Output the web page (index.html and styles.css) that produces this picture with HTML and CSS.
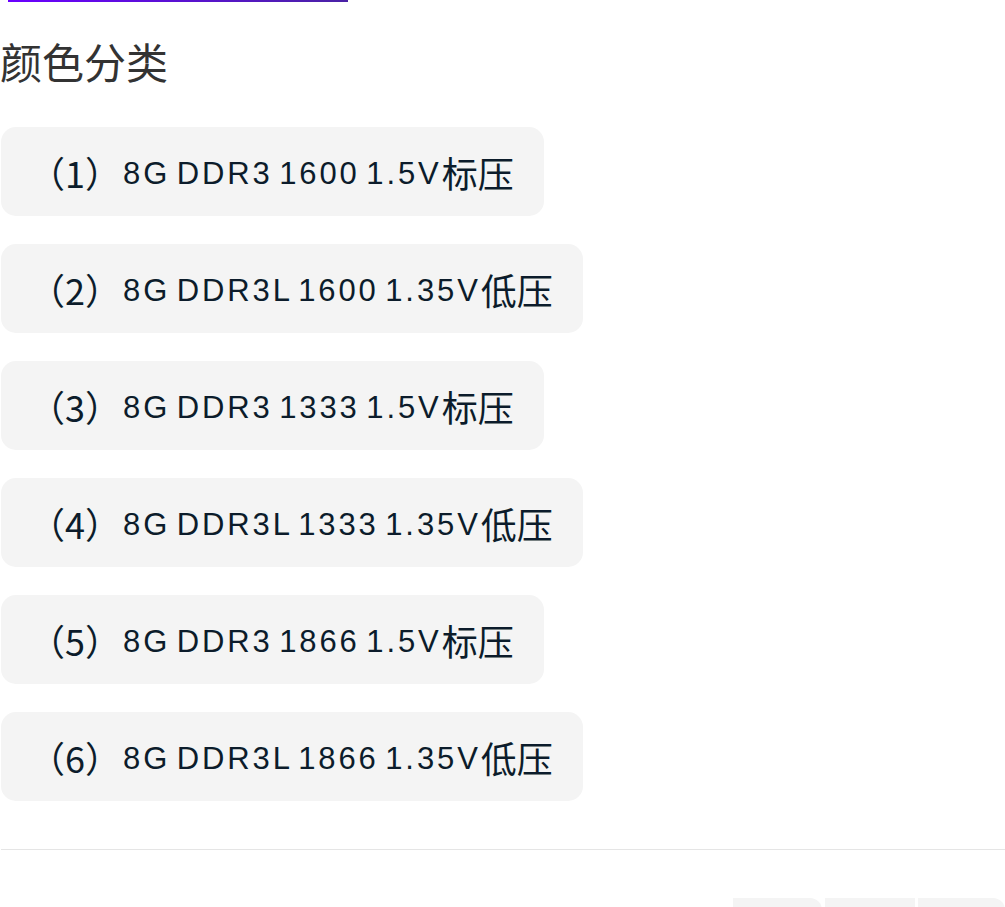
FILE: index.html
```html
<!DOCTYPE html>
<html lang="zh-CN">
<head>
<meta charset="utf-8">
<title>颜色分类</title>
<link rel="stylesheet" href="styles.css">
</head>
<body>
<div class="topbar"></div>
<h2 class="title">颜色分类</h2>
<div class="options">
  <div class="opt"><span class="cj">（1）</span><span class="lt">8G DDR3 1600 1.5V</span><span class="cj">标压</span></div>
  <div class="opt"><span class="cj">（2）</span><span class="lt">8G DDR3L 1600 1.35V</span><span class="cj">低压</span></div>
  <div class="opt"><span class="cj">（3）</span><span class="lt">8G DDR3 1333 1.5V</span><span class="cj">标压</span></div>
  <div class="opt"><span class="cj">（4）</span><span class="lt">8G DDR3L 1333 1.35V</span><span class="cj">低压</span></div>
  <div class="opt"><span class="cj">（5）</span><span class="lt">8G DDR3 1866 1.5V</span><span class="cj">标压</span></div>
  <div class="opt"><span class="cj">（6）</span><span class="lt">8G DDR3L 1866 1.35V</span><span class="cj">低压</span></div>
</div>
<div class="divider"></div>
<div class="actions">
  <div class="act act-a"></div>
  <div class="act act-b"></div>
  <div class="act act-c"></div>
</div>
</body>
</html>
```
FILE: styles.css
```css
html, body {
  margin: 0;
  padding: 0;
  background: #ffffff;
}
body {
  font-family: "Noto Sans CJK SC", "Liberation Sans", sans-serif;
  overflow: hidden;
}
.topbar {
  height: 2px;
  width: 340px;
  margin-left: 8px;
  background: linear-gradient(90deg, #6a00ff, #4a22a5);
}
.title {
  margin: 32px 0 0 0;
  font-size: 42px;
  line-height: 54px;
  font-weight: 400;
  color: #333333;
}
.options {
  margin: 39px 0 0 1px;
  display: flex;
  flex-direction: column;
  align-items: flex-start;
  gap: 28px;
}
.opt {
  height: 89px;
  padding: 0 30px 0 28px;
  display: flex;
  align-items: center;
  background: #f4f4f4;
  border-radius: 15px;
  color: #0c1c2b;
  white-space: nowrap;
}
.cj {
  font-family: "Noto Sans CJK SC", sans-serif;
  font-size: 36px;
  line-height: 44px;
}
.lt {
  font-family: "Liberation Sans", "Noto Sans CJK SC", sans-serif;
  font-size: 31px;
  line-height: 44px;
  letter-spacing: 2.9px;
  word-spacing: -5px;
  padding-top: 4px;
  padding-left: 2px;
}
.divider {
  margin: 48px 0 0 1px;
  height: 1px;
  background: #e5e5e5;
}
.actions {
  margin-top: 48px;
  display: flex;
  justify-content: flex-end;
  gap: 3px;
}
.act {
  height: 40px;
  background: #f4f4f4;
}
.act-a {
  width: 89px;
  border-top-right-radius: 12px;
}
.act-b {
  width: 90px;
}
.act-c {
  width: 87px;
  border-top-right-radius: 12px;
}
```
